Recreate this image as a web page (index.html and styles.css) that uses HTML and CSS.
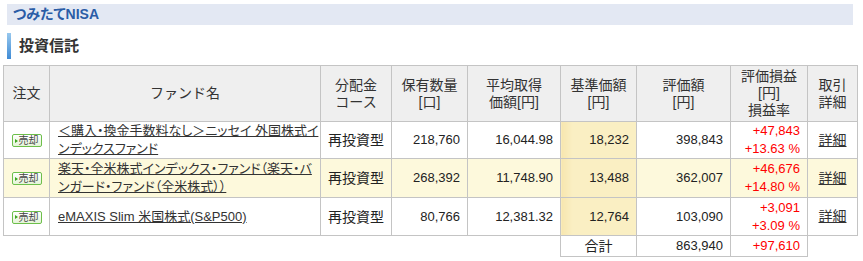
FILE: index.html
```html
<!DOCTYPE html>
<html lang="ja">
<head>
<meta charset="utf-8">
<link rel="stylesheet" href="styles.css">
</head>
<body>
<div class="page">
  <div class="topbar">つみたてNISA</div>
  <h2 class="heading">投資信託</h2>
  <table class="funds">
    <colgroup>
      <col class="c-order"><col class="c-name"><col class="c-course"><col class="c-qty"><col class="c-avg"><col class="c-base"><col class="c-val"><col class="c-pl"><col class="c-detail">
    </colgroup>
    <thead>
      <tr>
        <th>注文</th>
        <th>ファンド名</th>
        <th>分配金<br>コース</th>
        <th>保有数量<br>[口]</th>
        <th>平均取得<br>価額[円]</th>
        <th>基準価額<br>[円]</th>
        <th>評価額<br>[円]</th>
        <th>評価損益<br>[円]<br>損益率</th>
        <th>取引<br>詳細</th>
      </tr>
    </thead>
    <tbody>
      <tr class="r1">
        <td class="order"><span class="sell"><span class="tri"></span>売却</span></td>
        <td class="name"><a href="#"><span class="ln">＜購入・換金手数料なし＞ニッセイ 外国株式イ</span><br><span class="ln">ンデックスファンド</span></a></td>
        <td class="course">再投資型</td>
        <td class="num">218,760</td>
        <td class="num">16,044.98</td>
        <td class="num base">18,232</td>
        <td class="num">398,843</td>
        <td class="num pl">+47,843<br>+13.63 %</td>
        <td class="detail"><a href="#">詳細</a></td>
      </tr>
      <tr class="r2 alt">
        <td class="order"><span class="sell"><span class="tri"></span>売却</span></td>
        <td class="name"><a href="#"><span class="ln">楽天・全米株式インデックス・ファンド（楽天・バ</span><br><span class="ln">ンガード・ファンド（全米株式））</span></a></td>
        <td class="course">再投資型</td>
        <td class="num">268,392</td>
        <td class="num">11,748.90</td>
        <td class="num base">13,488</td>
        <td class="num">362,007</td>
        <td class="num pl">+46,676<br>+14.80 %</td>
        <td class="detail"><a href="#">詳細</a></td>
      </tr>
      <tr class="r3">
        <td class="order"><span class="sell"><span class="tri"></span>売却</span></td>
        <td class="name"><a href="#"><span class="ln">eMAXIS Slim 米国株式(S&amp;P500)</span></a></td>
        <td class="course">再投資型</td>
        <td class="num">80,766</td>
        <td class="num">12,381.32</td>
        <td class="num base">12,764</td>
        <td class="num">103,090</td>
        <td class="num pl">+3,091<br>+3.09 %</td>
        <td class="detail"><a href="#">詳細</a></td>
      </tr>
      <tr class="total">
        <td class="blank" colspan="5"></td>
        <td class="sum-label">合計</td>
        <td class="num">863,940</td>
        <td class="num pl">+97,610</td>
        <td class="blank"></td>
      </tr>
    </tbody>
  </table>
</div>
</body>
</html>
```

FILE: styles.css
```css
html, body {
  margin: 0;
  padding: 0;
  background: #ffffff;
}
body {
  font-family: "Liberation Sans", "Noto Sans CJK JP", sans-serif;
  font-size: 13px;
  color: #222;
}
.page {
  padding: 4px 0 0 3px;
  width: 855px;
}
.topbar {
  margin: 0 5px 0 4px;
  height: 21px;
  line-height: 21px;
  background: #e3e8f3;
  color: #2a5ca6;
  font-weight: bold;
  font-size: 14px;
  padding-left: 6px;
  font-feature-settings: "palt";
}
.heading {
  margin: 8px 0 6px 4px;
  height: 26px;
  line-height: 26px;
  font-size: 15px;
  font-weight: bold;
  color: #333;
  padding-left: 8px;
  border-left: 4px solid #5a9fdc;
  border-image: linear-gradient(to bottom, #9ccbef, #3b88d4) 1;
  box-sizing: border-box;
}
.funds {
  border-collapse: collapse;
  table-layout: fixed;
  width: 855px;
}
.c-order { width: 46px; }
.c-name { width: 271px; }
.c-course { width: 71px; }
.c-qty { width: 76px; }
.c-avg { width: 93px; }
.c-base { width: 76px; }
.c-val { width: 94px; }
.c-pl { width: 77px; }
.c-detail { width: 50px; }

.funds th, .funds td {
  border: 1px solid #c4c4c4;
  padding: 0 7px;
  line-height: 18px;
}
.funds th {
  background: #efefef;
  font-weight: normal;
  font-size: 14px;
  line-height: 17px;
  color: #333;
  text-align: center;
  height: 55px;
  padding: 0 2px;
}
.funds tbody td {
  height: 36px;
}
.funds tr.r2 td { height: 38px; }
.funds tr.r3 td { height: 37px; }
.alt td {
  background: #fdf9dc;
}
.order {
  text-align: center;
  padding: 0 !important;
}
.sell {
  display: inline-flex;
  align-items: center;
  box-sizing: border-box;
  width: 30px;
  height: 13px;
  border: 1px solid #6dbf4b;
  border-radius: 2px;
  background: linear-gradient(to bottom, #ffffff, #e4f4d8);
  font-size: 10px;
  line-height: 11px;
  color: #444;
  padding-left: 2px;
  vertical-align: middle;
  font-feature-settings: "palt";
}
.tri {
  width: 0;
  height: 0;
  border-left: 3px solid #3ea51d;
  border-top: 2.5px solid transparent;
  border-bottom: 2.5px solid transparent;
  margin-right: 1px;
}
.name {
  padding-left: 8px !important;
}
.name a {
  color: #333;
  text-decoration: underline;
  font-feature-settings: "palt";
  font-size: 13px;
}
.ln { white-space: nowrap; }
.course {
  text-align: center;
  font-size: 14px;
}
.num {
  text-align: right;
}
.funds td.base {
  background: linear-gradient(to right, #f7e6ae, #faefc3 15%, #faefc3);
}
.pl {
  color: #f00;
}
.detail {
  text-align: center;
  padding: 0 !important;
}
.detail a {
  color: #333;
  text-decoration: underline;
  font-size: 14px;
}
.funds tr.total td {
  height: 20px;
}
.funds td.blank {
  border: none;
  background: transparent;
}
.funds tr.total td.blank:first-child {
  border-top: 1px solid #c4c4c4;
}
.funds tr.total td.blank:last-child {
  border-top: 1px solid #c4c4c4;
  border-left: 1px solid #c4c4c4;
}
.sum-label {
  text-align: center;
  padding: 0 !important;
  font-size: 14px;
}
```
